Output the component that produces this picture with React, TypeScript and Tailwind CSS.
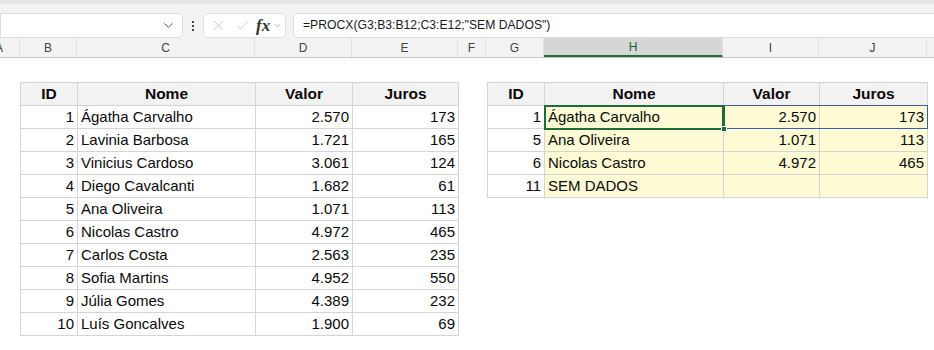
import { ChevronDown, X, Check } from "lucide-react";

type Row = { id: number; nome: string; valor?: string; juros?: string };

const dados: Row[] = [
  { id: 1, nome: "Ágatha Carvalho", valor: "2.570", juros: "173" },
  { id: 2, nome: "Lavinia Barbosa", valor: "1.721", juros: "165" },
  { id: 3, nome: "Vinicius Cardoso", valor: "3.061", juros: "124" },
  { id: 4, nome: "Diego Cavalcanti", valor: "1.682", juros: "61" },
  { id: 5, nome: "Ana Oliveira", valor: "1.071", juros: "113" },
  { id: 6, nome: "Nicolas Castro", valor: "4.972", juros: "465" },
  { id: 7, nome: "Carlos Costa", valor: "2.563", juros: "235" },
  { id: 8, nome: "Sofia Martins", valor: "4.952", juros: "550" },
  { id: 9, nome: "Júlia Gomes", valor: "4.389", juros: "232" },
  { id: 10, nome: "Luís Goncalves", valor: "1.900", juros: "69" },
];

const busca: Row[] = [
  { id: 1, nome: "Ágatha Carvalho", valor: "2.570", juros: "173" },
  { id: 5, nome: "Ana Oliveira", valor: "1.071", juros: "113" },
  { id: 6, nome: "Nicolas Castro", valor: "4.972", juros: "465" },
  { id: 11, nome: "SEM DADOS" },
];

const colunas = [
  { l: "A", w: "w-[20px]" },
  { l: "B", w: "w-[57px]" },
  { l: "C", w: "w-[178px]" },
  { l: "D", w: "w-[97px]" },
  { l: "E", w: "w-[106px]" },
  { l: "F", w: "w-[28px]" },
  { l: "G", w: "w-[58px]" },
  { l: "H", w: "w-[179px]" },
  { l: "I", w: "w-[96px]" },
  { l: "J", w: "w-[108px]" },
];

const FormulaBar = () => {
  return (
    <div className="h-[38px] bg-[#f3f3f3] border-t-[4px] border-[#e4e4e4] flex items-start pt-[9px]">
      <div className="w-[183px] h-[25px] bg-white border border-[#dcdcdc] rounded-r-[5px] flex items-center justify-end pr-[6px]">
        <ChevronDown size={15} strokeWidth={1.6} className="text-[#555]" />
      </div>
      <div className="w-[20px] h-[25px] flex flex-col items-center justify-center gap-[2px]">
        <span className="w-[2px] h-[2px] bg-[#444]" />
        <span className="w-[2px] h-[2px] bg-[#444]" />
        <span className="w-[2px] h-[2px] bg-[#444]" />
      </div>
      <div className="w-[83px] h-[25px] bg-white border border-[#e0e0e0] rounded-[5px] flex items-center pl-[6px]">
        <X size={17} strokeWidth={1.2} className="text-[#c4c4c4]" />
        <Check size={17} strokeWidth={1.2} className="text-[#c4c4c4] ml-[7px]" />
        <span className="ml-[5px] font-['Liberation_Serif',serif] italic font-bold text-[17px] text-[#333] leading-none">
          fx
        </span>
        <ChevronDown size={11} strokeWidth={1.4} className="text-[#888] ml-[2px]" />
      </div>
      <div className="ml-[7px] flex-1 h-[25px] bg-white border border-[#dcdcdc] border-r-0 rounded-l-[5px] flex items-center pl-[9px] text-[12.2px] text-[#1a1a1a] font-['Liberation_Sans',sans-serif]">
        =PROCX(G3;B3:B12;C3:E12;"SEM DADOS")
      </div>
    </div>
  );
};

const ColumnHeaders = () => {
  return (
    <div className="h-[20px] bg-[#f3f3f3] border-b border-[#c6c6c6] flex font-['Liberation_Sans',sans-serif] text-[12px] text-[#444]">
      {colunas.map((c) => (
        <div
          key={c.l}
          className={`${c.w} shrink-0 h-full flex items-center justify-center overflow-hidden border-r border-[#e2e2e2] ${
            c.l === "H" ? "bg-[#d6d6d6] border-b-2 border-b-[#1e6b3c] text-[#1e5c36]" : ""
          } ${c.l === "A" ? "justify-start" : ""}`}
        >
          <span className={c.l === "A" ? "-ml-[5px]" : ""}>{c.l}</span>
        </div>
      ))}
      <div className="flex-1" />
    </div>
  );
};

const cell = "h-[23px] border-r border-b border-[#d4d4d4] flex items-center px-[3px] overflow-hidden whitespace-nowrap";

const Tabela = ({
  rows,
  ws,
  destaque,
}: {
  rows: Row[];
  ws: string[];
  destaque?: boolean;
}) => {
  return (
    <div className="border-l border-t border-[#d4d4d4] relative">
      <div className="flex bg-[#f2f2f2] font-bold text-[15.5px]">
        <div className={`${ws[0]} ${cell} justify-center`}>ID</div>
        <div className={`${ws[1]} ${cell} justify-center`}>Nome</div>
        <div className={`${ws[2]} ${cell} justify-center`}>Valor</div>
        <div className={`${ws[3]} ${cell} justify-center`}>Juros</div>
      </div>
      {rows.map((r, i) => (
        <div key={r.id} className="flex">
          <div className={`${ws[0]} ${cell} justify-end bg-white`}>{r.id}</div>
          <div className={`${ws[1]} ${cell} ${destaque ? "bg-[#fffbd5]" : "bg-white"} relative`}>
            {r.nome}
            {destaque && i === 0 && (
              <span className="absolute -left-px -top-px w-[calc(100%+2px)] h-[25px] border-2 border-[#1f6b3a] pointer-events-none" />
            )}
          </div>
          <div className={`${ws[2]} ${cell} justify-end ${destaque ? "bg-[#fffbd5]" : "bg-white"}`}>{r.valor}</div>
          <div className={`${ws[3]} ${cell} justify-end ${destaque ? "bg-[#fffbd5]" : "bg-white"}`}>{r.juros}</div>
        </div>
      ))}
      {destaque && (
        <>
          <span className="absolute left-[56px] top-[22px] w-[384px] h-[24px] border border-[#3b5ea8] pointer-events-none" />
          <span className="absolute left-[56px] top-[22px] w-[181px] h-[25px] border-2 border-[#1f6b3a] pointer-events-none" />
          <span className="absolute left-[233px] top-[43px] w-[6px] h-[6px] bg-[#1f6b3a] border border-white pointer-events-none" />
        </>
      )}
    </div>
  );
};

export default function App() {
  return (
    <div className="w-[934px] h-[350px] bg-white overflow-hidden">
      <FormulaBar />
      <ColumnHeaders />
      <div className="flex items-start pt-[24px] text-[15px] text-[#0a0a0a] font-['Liberation_Sans',sans-serif]">
        <div className="ml-[20px]">
          <Tabela rows={dados} ws={["w-[57px]", "w-[178px]", "w-[97px]", "w-[106px]"]} />
        </div>
        <div className="ml-[28px]">
          <Tabela rows={busca} ws={["w-[57px]", "w-[179px]", "w-[96px]", "w-[108px]"]} destaque />
        </div>
      </div>
    </div>
  );
}
